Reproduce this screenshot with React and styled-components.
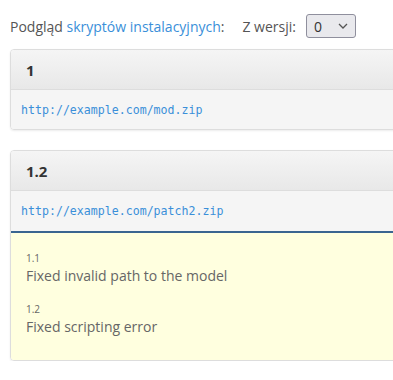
import React from "react";
import styled, { createGlobalStyle } from "styled-components";

const Global = createGlobalStyle`
  html, body { margin: 0; padding: 0; background: #fff; overflow: hidden; }
  body { font-family: "Open Sans", "Noto Sans", sans-serif; font-size: 14px; color: #555; }
`;

const Page = styled.div`
  padding: 14px 0 0 10px;
  width: 420px;
`;

const Toolbar = styled.div`
  display: flex;
  align-items: center;
  height: 24px;
  margin-bottom: 11px;
`;

const Label = styled.span`
  color: #555;
  font-size: 14px;
  margin-right: ${(p) => p.$gap || 0}px;
`;

const Link = styled.a`
  color: #3a8fd9;
  text-decoration: none;
`;

const Select = styled.div`
  box-sizing: border-box;
  width: 50px;
  height: 24px;
  border: 1px solid #8f8f9d;
  border-radius: 3px;
  background: #e9e9ed;
  display: flex;
  align-items: center;
  justify-content: space-between;
  padding: 0 7px 0 7px;
  font-size: 14px;
  color: #333;
`;

const Panel = styled.div`
  border: 1px solid #ddd;
  border-radius: 4px;
  margin-bottom: ${(p) => p.$mb || 0}px;
  overflow: hidden;
  box-shadow: 0 1px 2px rgba(0, 0, 0, 0.08);
`;

const Heading = styled.div`
  box-sizing: border-box;
  height: 40px;
  padding: 0 15px;
  display: flex;
  align-items: center;
  background: linear-gradient(#f5f5f5, #e8e8e8);
  border-bottom: 1px solid #ddd;
  font-weight: 700;
  font-size: 15px;
  color: #333;
`;

const UrlRow = styled.div`
  box-sizing: border-box;
  height: ${(p) => p.$h}px;
  padding: 0 10px;
  display: flex;
  align-items: center;
  background: #f5f5f5;
  font-family: "DejaVu Sans Mono", monospace;
  font-size: 11.6px;
  color: #3a8fd9;
`;

const Changes = styled.div`
  border-top: 2px solid #3a6590;
  background: #ffffdf;
  padding: 17px 15px 20px;
  height: 129px;
  box-sizing: border-box;
`;

const Change = styled.div`
  margin-bottom: 15px;
`;

const Version = styled.div`
  font-size: 10px;
  line-height: 16px;
  color: #666;
`;

const Note = styled.div`
  font-size: 14px;
  line-height: 20px;
  color: #666;
`;

const Chevron = () => (
  <svg width="10" height="6" viewBox="0 0 10 6">
    <path d="M1 1 L5 5 L9 1" fill="none" stroke="#555" strokeWidth="1.3" />
  </svg>
);

export default function App() {
  return (
    <>
      <Global />
      <Page>
        <Toolbar>
          <Label $gap={18}>
            Podgląd <Link href="#">skryptów instalacyjnych</Link>:
          </Label>
          <Label $gap={10}>Z wersji:</Label>
          <Select>
            <span>0</span>
            <Chevron />
          </Select>
        </Toolbar>
        <Panel $mb={20}>
          <Heading>1</Heading>
          <UrlRow $h={39}>http://example.com/mod.zip</UrlRow>
        </Panel>
        <Panel>
          <Heading>1.2</Heading>
          <UrlRow $h={40}>http://example.com/patch2.zip</UrlRow>
          <Changes>
            <Change>
              <Version>1.1</Version>
              <Note>Fixed invalid path to the model</Note>
            </Change>
            <Change>
              <Version>1.2</Version>
              <Note>Fixed scripting error</Note>
            </Change>
          </Changes>
        </Panel>
      </Page>
    </>
  );
}
